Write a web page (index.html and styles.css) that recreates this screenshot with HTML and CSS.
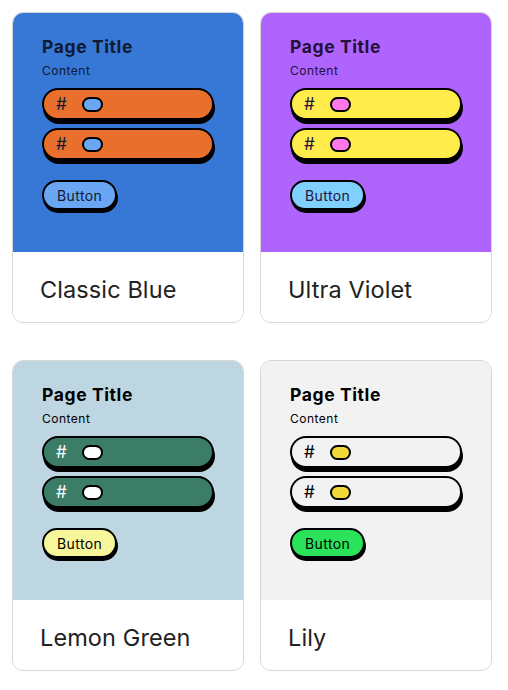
FILE: index.html
```html
<!DOCTYPE html>
<html lang="en">

<head>
  <meta charset="UTF-8">
  <meta name="viewport" content="width=device-width, initial-scale=1.0">
  <title>Themes</title>
  <link rel="stylesheet" href="styles.css">
</head>

<body>
  <div class="theme-grid">

    <div class="theme-card theme-blue">
      <div class="preview">
        <h2>Page Title</h2>
        <p>Content</p>
        <div class="channel"><span class="hash">#</span><span class="toggle"></span></div>
        <div class="channel"><span class="hash">#</span><span class="toggle"></span></div>
        <button class="btn">Button</button>
      </div>
      <div class="theme-name">Classic Blue</div>
    </div>

    <div class="theme-card theme-violet">
      <div class="preview">
        <h2>Page Title</h2>
        <p>Content</p>
        <div class="channel"><span class="hash">#</span><span class="toggle"></span></div>
        <div class="channel"><span class="hash">#</span><span class="toggle"></span></div>
        <button class="btn">Button</button>
      </div>
      <div class="theme-name">Ultra Violet</div>
    </div>

    <div class="theme-card theme-green">
      <div class="preview">
        <h2>Page Title</h2>
        <p>Content</p>
        <div class="channel"><span class="hash">#</span><span class="toggle"></span></div>
        <div class="channel"><span class="hash">#</span><span class="toggle"></span></div>
        <button class="btn">Button</button>
      </div>
      <div class="theme-name">Lemon Green</div>
    </div>

    <div class="theme-card theme-lily">
      <div class="preview">
        <h2>Page Title</h2>
        <p>Content</p>
        <div class="channel"><span class="hash">#</span><span class="toggle"></span></div>
        <div class="channel"><span class="hash">#</span><span class="toggle"></span></div>
        <button class="btn">Button</button>
      </div>
      <div class="theme-name">Lily</div>
    </div>

  </div>
</body>

</html>
```

FILE: styles.css
```css
body {
  font-family: Inter, "Noto Sans", sans-serif;
  background-color: #fff;
  margin: 0;
  padding: 12px;
}

.theme-grid {
  display: grid;
  grid-template-columns: 232px 232px;
  column-gap: 16px;
  row-gap: 37px;
}

.theme-card {
  border: 1px solid rgba(0, 0, 0, 0.16);
  border-radius: 11px;
  overflow: hidden;
  height: 311px;
  box-sizing: border-box;
  display: flex;
  flex-direction: column;
}

.preview {
  height: 240px;
  box-sizing: border-box;
  padding: 24px 29px 0 30px;
  display: flex;
  flex-direction: column;
  align-items: flex-start;
  color: var(--text);
  background-color: var(--bg);
  margin: -1px -1px 0;
  width: calc(100% + 2px);
}

.preview h2 {
  font-size: 17.5px;
  font-weight: 700;
  letter-spacing: 0.6px;
  margin: 0;
  line-height: 22px;
}

.preview p {
  font-size: 12px;
  letter-spacing: 0.5px;
  margin: 5px 0 0;
  line-height: 16px;
}

.channel {
  width: 172px;
  height: 32px;
  box-sizing: border-box;
  border: 2px solid #000;
  border-radius: 16px;
  box-shadow: 1px 4px 0 #000;
  background-color: var(--pill);
  display: flex;
  align-items: center;
  padding-left: 12px;
  margin-top: 8px;
}

.preview p + .channel {
  margin-top: 9px;
}

.hash {
  font-size: 17px;
  line-height: 1;
  color: var(--hash);
  width: 26px;
}

.toggle {
  width: 21px;
  height: 15px;
  box-sizing: border-box;
  border: 2px solid #000;
  border-radius: 8px;
  background-color: var(--toggle);
}

.btn {
  margin-top: 20px;
  height: 30px;
  padding: 0 13px;
  border: 2px solid #000;
  border-radius: 15px;
  box-shadow: 1px 3px 0 #000;
  background-color: var(--button);
  color: var(--text);
  font-family: Inter, "Noto Sans", sans-serif;
  font-size: 14px;
  letter-spacing: 0.4px;
}

.theme-name {
  flex: 1;
  display: flex;
  align-items: center;
  padding-left: 27px;
  padding-top: 4px;
  font-size: 23.5px;
  letter-spacing: 0.1px;
  color: #222;
  background-color: #fff;
}

.theme-blue {
  --bg: #3777d5;
  --text: #0f1a33;
  --pill: #e8702c;
  --hash: #0f1a33;
  --toggle: #6aa6f2;
  --button: #6aa6f2;
}

.theme-violet {
  --bg: #b064fe;
  --text: #22113a;
  --pill: #ffec4b;
  --hash: #22113a;
  --toggle: #ff78ea;
  --button: #80d0fd;
}

.theme-green {
  --bg: #bdd6e1;
  --text: #000;
  --pill: #3c7d68;
  --hash: #fff;
  --toggle: #fff;
  --button: #f8f69a;
}

.theme-lily {
  --bg: #f2f2f2;
  --text: #000;
  --pill: #f2f2f2;
  --hash: #000;
  --toggle: #f0d83a;
  --button: #2ae35b;
}
```
